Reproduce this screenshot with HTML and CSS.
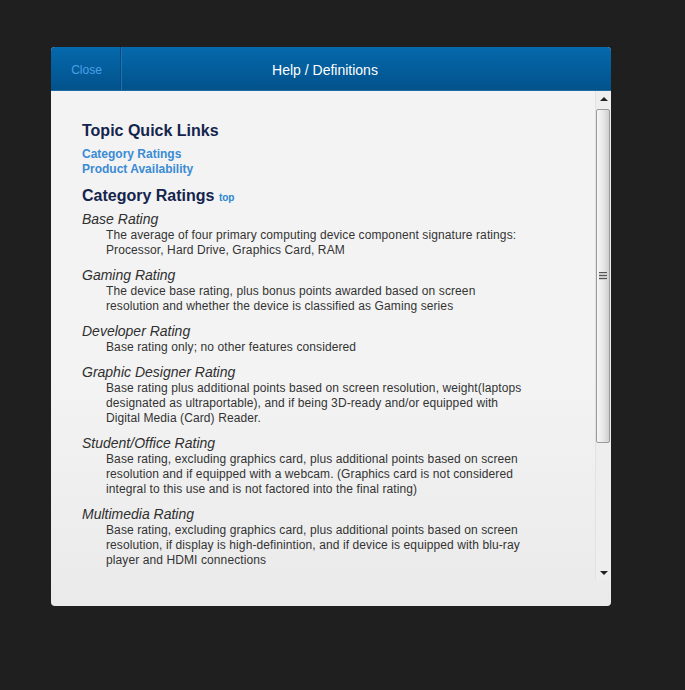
FILE: index.html
```html
<!DOCTYPE html>
<html>
<head>
<meta charset="utf-8">
<link rel="stylesheet" href="styles.css">
</head>
<body>
<div class="dialog">
  <div class="header">
    <a class="close">Close</a>
    <div class="title">Help / Definitions</div>
  </div>
  <div class="body">
    <div class="content">
      <h3 class="topic">Topic Quick Links</h3>
      <div class="links">
        <a class="link">Category Ratings</a>
        <a class="link">Product Availability</a>
      </div>
      <h2 class="section">Category Ratings <a class="top">top</a></h2>
      <div class="item">
        <div class="term">Base Rating</div>
        <div class="desc">The average of four primary computing device component signature ratings: Processor, Hard Drive, Graphics Card, RAM</div>
      </div>
      <div class="item">
        <div class="term">Gaming Rating</div>
        <div class="desc">The device base rating, plus bonus points awarded based on screen resolution and whether the device is classified as Gaming series</div>
      </div>
      <div class="item">
        <div class="term">Developer Rating</div>
        <div class="desc">Base rating only; no other features considered</div>
      </div>
      <div class="item">
        <div class="term">Graphic Designer Rating</div>
        <div class="desc">Base rating plus additional points based on screen resolution, weight(laptops designated as ultraportable), and if being 3D-ready and/or equipped with Digital Media (Card) Reader.</div>
      </div>
      <div class="item">
        <div class="term">Student/Office Rating</div>
        <div class="desc">Base rating, excluding graphics card, plus additional points based on screen resolution and if equipped with a webcam. (Graphics card is not considered integral to this use and is not factored into the final rating)</div>
      </div>
      <div class="item">
        <div class="term">Multimedia Rating</div>
        <div class="desc">Base rating, excluding graphics card, plus additional points based on screen resolution, if display is high-definintion, and if device is equipped with blu-ray player and HDMI connections</div>
      </div>
    </div>
    <div class="scrollbar">
      <div class="arrow up"></div>
      <div class="track">
        <div class="thumb"><div class="grip"></div></div>
      </div>
      <div class="arrow down"></div>
    </div>
  </div>
  <div class="footer"></div>
</div>
</body>
</html>
```

FILE: styles.css
```css
html, body {
  margin: 0;
  padding: 0;
  background: #1f1f1f;
  height: 100%;
}
body {
  font-family: "Liberation Sans", Arial, sans-serif;
  padding: 47px 0 0 51px;
  box-sizing: border-box;
}
.dialog {
  width: 560px;
  height: 559px;
  border-radius: 4px;
  overflow: hidden;
  background: linear-gradient(#f3f3f3, #f3f3f3 60%, #eaeaea);
  display: flex;
  flex-direction: column;
}
.header {
  height: 43px;
  border-bottom: 1px solid #1f6aa4;
  background: linear-gradient(#0569ad, #02528b);
  display: flex;
  align-items: stretch;
  flex: none;
}
.close {
  width: 70px;
  display: flex;
  align-items: center;
  justify-content: center;
  font-size: 12px;
  color: #4aa0ea;
  border-right: 1px solid #034b82;
  box-shadow: 1px 0 0 #2170b0;
  padding: 2px 0 0 2px;
  box-sizing: border-box;
}
.title {
  flex: 1;
  display: flex;
  align-items: center;
  justify-content: center;
  color: #ffffff;
  font-size: 14px;
  padding-right: 82px;
  padding-top: 2px;
}
.body {
  height: 489px;
  display: flex;
  flex: none;
}
.content {
  flex: 1;
  overflow: hidden;
  padding: 30px 0 0 31px;
  box-sizing: border-box;
}
.topic {
  margin: 0;
  font-size: 16px;
  line-height: 20px;
  font-weight: bold;
  color: #14244d;
}
.links {
  margin-top: 6px;
  display: flex;
  flex-direction: column;
}
.link {
  font-size: 12px;
  line-height: 15px;
  font-weight: bold;
  color: #3a8bd3;
}
.section {
  margin: 9px 0 3px 0;
  font-size: 16px;
  line-height: 20px;
  font-weight: bold;
  color: #14244d;
}
.top {
  font-size: 10px;
  font-weight: bold;
  color: #2a86d0;
}
.item {
  margin-bottom: 9px;
}
.term {
  font-style: italic;
  font-size: 14px;
  line-height: 17px;
  color: #2f2f2f;
}
.desc {
  font-size: 12px;
  line-height: 15px;
  letter-spacing: 0.1px;
  color: #333333;
  margin-left: 24px;
  width: 420px;
}
.scrollbar {
  width: 16px;
  flex: none;
  display: flex;
  flex-direction: column;
  background: #eeeeee;
  border-left: 1px solid #e2e2e2;
  box-sizing: border-box;
}
.arrow {
  height: 16px;
  flex: none;
  position: relative;
}
.arrow::after {
  content: "";
  position: absolute;
  left: 4px;
  width: 0;
  height: 0;
  border-left: 4px solid transparent;
  border-right: 4px solid transparent;
}
.arrow.up::after {
  top: 6px;
  border-bottom: 4px solid #222;
}
.arrow.down::after {
  top: 7px;
  border-top: 4px solid #222;
}
.track {
  flex: 1;
  padding-top: 2px;
}
.thumb {
  height: 334px;
  margin-right: 1px;
  border: 1px solid #9a9a9a;
  border-radius: 2px;
  background: linear-gradient(90deg, #f6f6f6, #e8e8e8 50%, #cfcfcf);
  box-sizing: border-box;
  display: flex;
  align-items: center;
  justify-content: center;
}
.grip {
  width: 8px;
  height: 8px;
  background: repeating-linear-gradient(#555 0, #555 1px, #ccc 1px, #ccc 3px);
}
.footer {
  flex: 1;
}
```
